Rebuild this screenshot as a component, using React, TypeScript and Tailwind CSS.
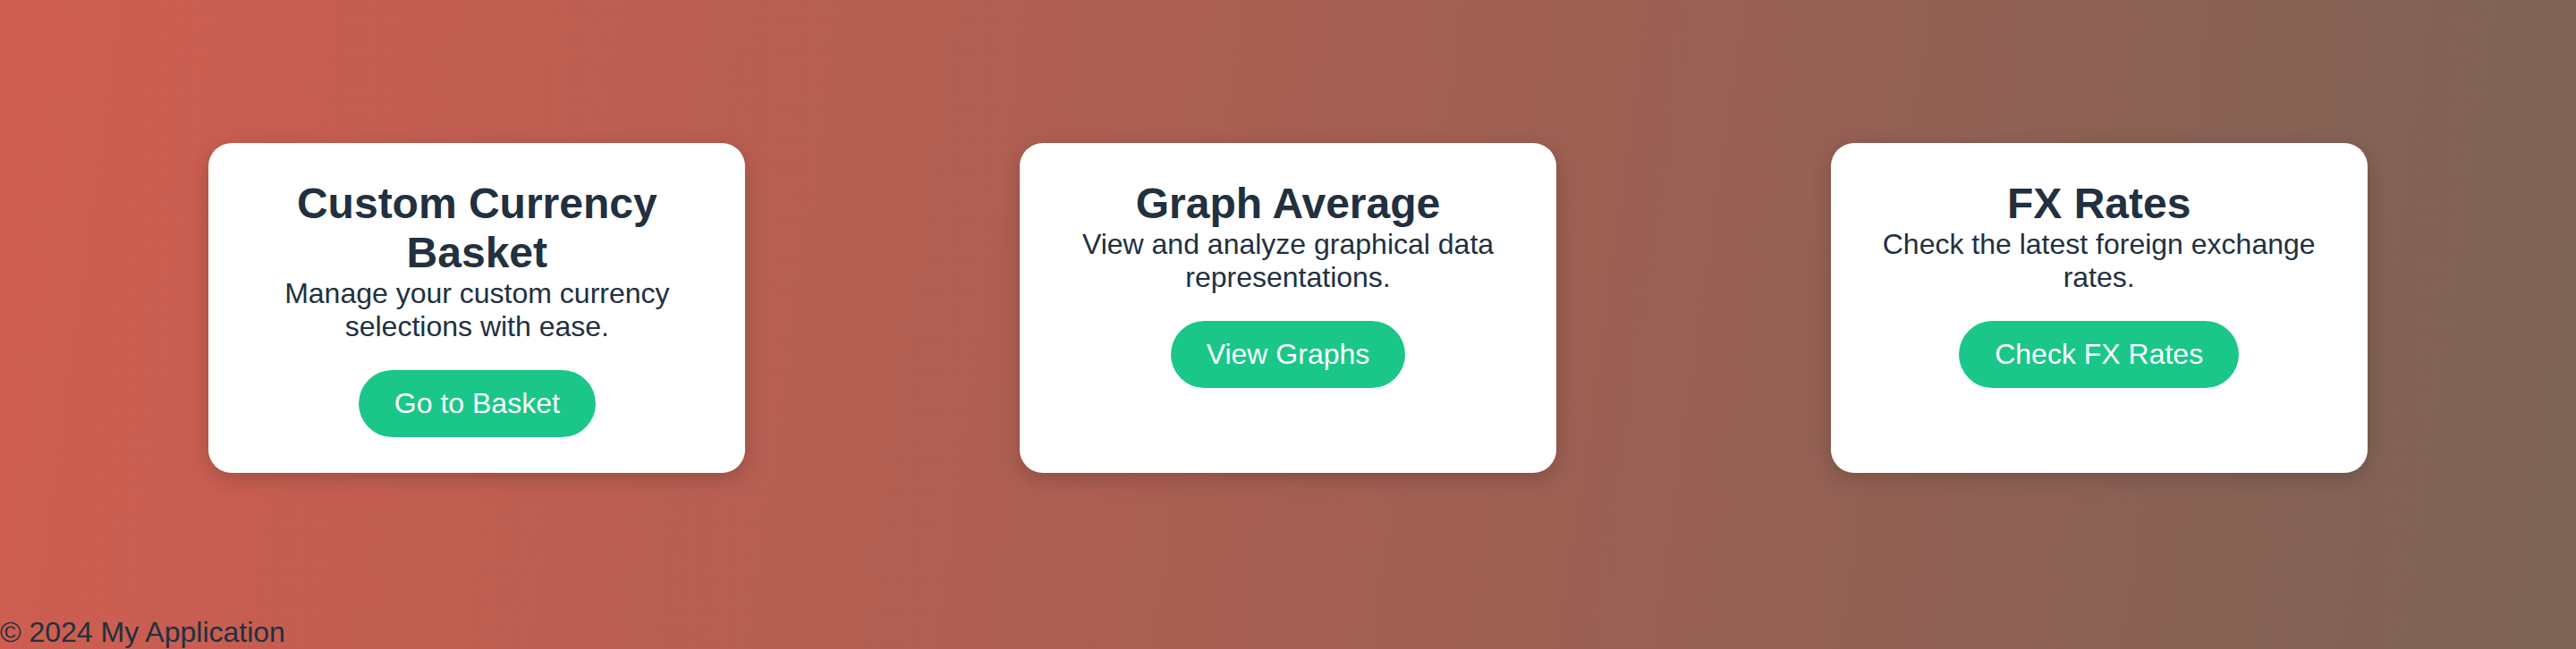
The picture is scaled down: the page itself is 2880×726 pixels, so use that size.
import React from "react";

interface FeatureCardProps {
  title: string;
  description: string;
  action: string;
}

const cards: FeatureCardProps[] = [
  {
    title: "Custom Currency Basket",
    description: "Manage your custom currency selections with ease.",
    action: "Go to Basket",
  },
  {
    title: "Graph Average",
    description: "View and analyze graphical data representations.",
    action: "View Graphs",
  },
  {
    title: "FX Rates",
    description: "Check the latest foreign exchange rates.",
    action: "Check FX Rates",
  },
];

function FeatureCard({ title, description, action }: FeatureCardProps) {
  return (
    <div className="w-[600px] mx-auto flex flex-col items-center bg-white rounded-[26px] shadow-[0_6px_22px_rgba(0,0,0,0.18)] px-[40px] pt-[40px] pb-[40px] text-center">
      <h2 className="text-[48px] leading-[55px] font-bold">{title}</h2>
      <p className="text-[32px] leading-[36.75px]">{description}</p>
      <button className="mt-[31px] bg-[#1bc689] text-white text-[32px] leading-[36.75px] rounded-full px-[40px] py-[19px]">
        {action}
      </button>
    </div>
  );
}

export default function App() {
  return (
    <div className="min-h-screen flex flex-col bg-[linear-gradient(98deg,#d05e51_0%,#a65f52_50%,#7c6356_100%)] text-[#22303f] font-['Liberation_Sans',Arial,sans-serif]">
      <main className="flex-1 flex items-center">
        <div className="w-full grid grid-cols-3 px-[80px]">
          {cards.map((c) => (
            <FeatureCard key={c.title} {...c} />
          ))}
        </div>
      </main>
      <footer className="text-[32px] leading-[37px]">© 2024 My Application</footer>
    </div>
  );
}
